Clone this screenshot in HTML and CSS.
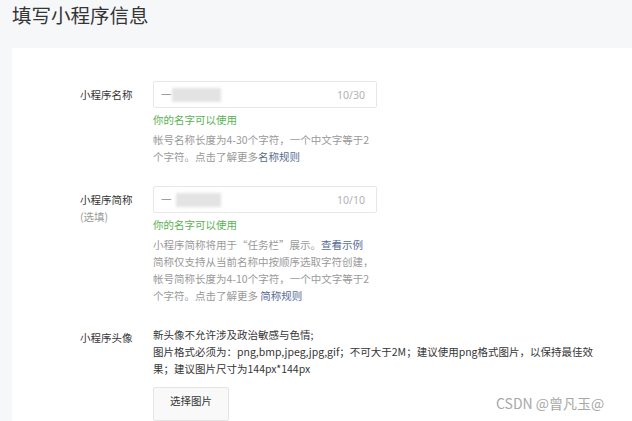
FILE: index.html
```html
<!DOCTYPE html>
<html lang="zh-CN">
<head>
<meta charset="utf-8">
<link rel="stylesheet" href="styles.css">
</head>
<body>
<div class="page">
  <h1 class="title">填写小程序信息</h1>
  <div class="card">
    <div class="row">
      <div class="label">小程序名称</div>
      <div class="field">
        <div class="input">
          <span class="value">一</span><span class="blur blur-a"></span>
          <span class="count">10/30</span>
        </div>
        <div class="ok">你的名字可以使用</div>
        <p class="tips">帐号名称长度为4-30个字符，一个中文字等于2个字符。点击了解更多<a class="link">名称规则</a></p>
      </div>
    </div>
    <div class="row">
      <div class="label">小程序简称<span class="sub">(选填)</span></div>
      <div class="field">
        <div class="input">
          <span class="value">一</span><span class="blur blur-b"></span>
          <span class="count">10/10</span>
        </div>
        <div class="ok">你的名字可以使用</div>
        <p class="tips">小程序简称将用于“任务栏”展示。<a class="link">查看示例</a><br>简称仅支持从当前名称中按顺序选取字符创建，帐号简称长度为4-10个字符，一个中文字等于2个字符。点击了解更多 <a class="link">简称规则</a></p>
      </div>
    </div>
    <div class="row">
      <div class="label label-avatar">小程序头像</div>
      <div class="field field-wide">
        <p class="desc">新头像不允许涉及政治敏感与色情;<br>图片格式必须为：png,bmp,jpeg,jpg,gif；不可大于2M；建议使用png格式图片，以保持最佳效果；建议图片尺寸为144px*144px</p>
        <button class="btn">选择图片</button>
      </div>
    </div>
  </div>
  <div class="watermark">CSDN @曾凡玉@</div>
</div>
</body>
</html>
```
FILE: styles.css
```css
html, body {
  margin: 0;
  padding: 0;
  height: 100%;
  overflow: hidden;
}
body {
  background: #f6f7f9;
  font-family: "Noto Sans CJK SC", "Noto Sans", sans-serif;
  color: #353535;
}
.page {
  position: relative;
  height: 100%;
  display: flex;
  flex-direction: column;
}
.title {
  flex: none;
  margin: 0;
  padding: 0 0 0 12px;
  height: 48px;
  line-height: 30px;
  font-size: 19.5px;
  font-weight: normal;
  color: #353535;
}
.card {
  flex: 1 1 auto;
  min-height: 0;
  overflow: hidden;
  margin-left: 12px;
  background: #fff;
  padding: 33px 0 0 68px;
}
.row {
  display: flex;
  margin-bottom: 21px;
}
.label {
  width: 73px;
  flex: none;
  font-size: 10.5px;
  line-height: 17px;
  padding-top: 5px;
  color: #353535;
  display: flex;
  flex-direction: column;
}
.label .sub {
  color: #9a9a9a;
}
.label-avatar {
  padding-top: 4px;
}
.field {
  width: 224px;
}
.field-wide {
  width: 460px;
}
.input {
  box-sizing: border-box;
  height: 27px;
  border: 1px solid #e7e7eb;
  border-radius: 2px;
  display: flex;
  align-items: center;
  padding: 0 11px 0 7px;
  font-size: 10.5px;
}
.value {
  color: #888;
}
.blur {
  height: 14px;
  background: #e3e3e3;
  filter: blur(1.5px);
}
.blur-a {
  width: 49px;
}
.blur-b {
  width: 45px;
  margin-left: 4px;
}
.count {
  margin-left: auto;
  color: #b2b2b2;
  font-family: "Noto Sans", sans-serif;
  font-size: 10.5px;
}
.ok {
  margin-top: 3px;
  font-size: 10.5px;
  line-height: 17px;
  color: #5ab152;
}
.tips {
  margin: 3px 0 0;
  font-size: 10.5px;
  line-height: 17px;
  color: #9a9a9a;
}
.link {
  color: #576b95;
  text-decoration: none;
}
.desc {
  margin: 1px 0 0;
  font-size: 10.5px;
  line-height: 17px;
  color: #353535;
}
.btn {
  box-sizing: border-box;
  display: flex;
  justify-content: center;
  align-items: flex-start;
  margin-top: 10px;
  width: 76px;
  height: 34px;
  padding: 4px 0 0;
  border: 1px solid #e4e4e4;
  border-radius: 2px;
  background: #f9f9f9;
  font-family: inherit;
  font-size: 10.5px;
  line-height: 17px;
  color: #353535;
}
.watermark {
  position: absolute;
  left: 496px;
  top: 394px;
  font-size: 14px;
  line-height: 18px;
  color: #a8a8a8;
  text-shadow: 0 0 2px #fff;
  white-space: nowrap;
}
```
